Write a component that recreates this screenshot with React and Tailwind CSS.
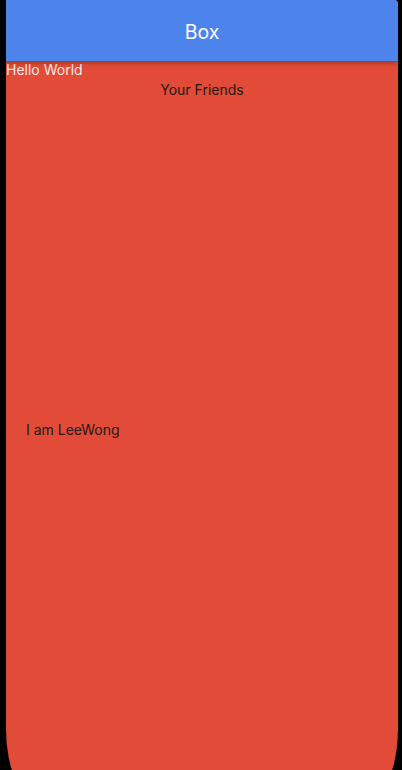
import React from 'react';

export default function App() {
  return (
    <div className="h-[770px] w-[402px] bg-black pl-[6px] pr-[4px] overflow-hidden" style={{ fontFamily: 'Inter, "Noto Sans", sans-serif' }}>
      <div className="h-[870px] bg-[#e14b37] rounded-tr-[4px] rounded-b-[140px] overflow-hidden">
        <div className="h-[770px] flex flex-col">
          {/* App bar */}
          <div className="h-[61px] shrink-0 bg-[#4d84ec] flex items-center justify-center shadow-[0_2px_4px_rgba(0,0,0,0.3)] relative z-10">
            <span className="text-white text-[19.5px] leading-none mt-[5px]">Box</span>
          </div>

          <p className="text-[14px] leading-[16px] text-[#fbe9e6] mt-[1px]">Hello World</p>
          <p className="text-[14px] leading-[16px] text-[#2a1714] text-center mt-[4px]">Your Friends</p>

          <div className="flex-1 flex items-center pl-[20px]">
            <span className="text-[14px] leading-[16px] text-[#2a1714] mt-[-8px]">I am LeeWong</span>
          </div>
        </div>
      </div>
    </div>
  );
}
